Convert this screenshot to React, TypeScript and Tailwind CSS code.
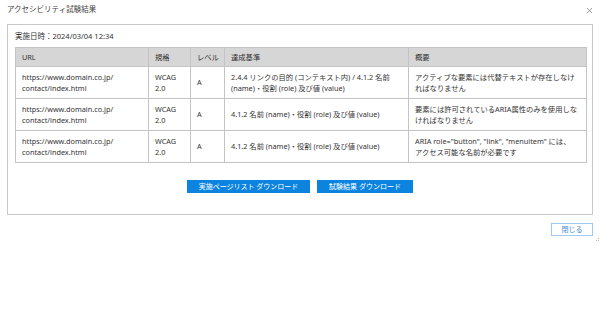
import { X } from 'lucide-react'

// ─── Data ─────────────────────────────────────────────────────────────────────

type Row = { url: string[]; std: string[]; level: string; criteria: string[]; summary: string[] }

const ROWS: Row[] = [
  {
    url: ['https://www.domain.co.jp/', 'contact/index.html'],
    std: ['WCAG', '2.0'],
    level: 'A',
    criteria: ['2.4.4 リンクの目的 (コンテキスト内) / 4.1.2 名前', '(name)・役割 (role) 及び値 (value)'],
    summary: ['アクティブな要素には代替テキストが存在しなけ', 'ればなりません'],
  },
  {
    url: ['https://www.domain.co.jp/', 'contact/index.html'],
    std: ['WCAG', '2.0'],
    level: 'A',
    criteria: ['4.1.2 名前 (name)・役割 (role) 及び値 (value)'],
    summary: ['要素には許可されているARIA属性のみを使用しな', 'ければなりません'],
  },
  {
    url: ['https://www.domain.co.jp/', 'contact/index.html'],
    std: ['WCAG', '2.0'],
    level: 'A',
    criteria: ['4.1.2 名前 (name)・役割 (role) 及び値 (value)'],
    summary: ['ARIA role="button", "link", "menuitem" には、', 'アクセス可能な名前が必要です'],
  },
]

const FONT = "font-['Noto_Sans','Noto_Sans_CJK_JP',sans-serif]"

function Lines({ lines }: { lines: string[] }) {
  return (
    <>
      {lines.map((l, i) => (
        <div key={i} className="whitespace-nowrap">{l}</div>
      ))}
    </>
  )
}

// ─── Component ────────────────────────────────────────────────────────────────

export default function App() {
  const cell = 'border border-[#c4c4c4] px-[6px] py-0 align-middle'
  return (
    <div className={`relative w-[600px] h-[325px] bg-white text-[#333] ${FONT}`}>
      {/* Title bar */}
      <div className="flex items-center justify-between pl-[7px] pr-[6px] h-[20px]">
        <span className="text-[7.5px] leading-none text-[#444]">アクセシビリティ試験結果</span>
        <X size={9} strokeWidth={1.5} className="text-[#555]" />
      </div>

      {/* Main panel */}
      <div className="mx-[7px] mt-[4px] h-[191px] border border-[#c9c9c9] px-[7px] pt-[6px]">
        <div className="text-[7.5px] leading-[10px] mb-[6px]">実施日時：2024/03/04 12:34</div>

        <table className="w-[571px] table-fixed border-collapse text-[7.3px] leading-[11px] text-[#333]">
          <colgroup>
            <col className="w-[133px]" />
            <col className="w-[42px]" />
            <col className="w-[34px]" />
            <col className="w-[184px]" />
            <col className="w-[178px]" />
          </colgroup>
          <thead>
            <tr className="h-[19px] bg-[#d6d6d6]">
              {['URL', '規格', 'レベル', '達成基準', '概要'].map(h => (
                <th
                  key={h}
                  className="border border-[#c4c4c4] px-[6px] py-0 text-left font-normal whitespace-nowrap overflow-visible"
                >
                  {h}
                </th>
              ))}
            </tr>
          </thead>
          <tbody>
            {ROWS.map((r, i) => (
              <tr key={i} className="h-[32px]">
                <td className={cell}><Lines lines={r.url} /></td>
                <td className={cell}><Lines lines={r.std} /></td>
                <td className={cell}>{r.level}</td>
                <td className={cell}><Lines lines={r.criteria} /></td>
                <td className={`${cell} pr-[2px]`}><Lines lines={r.summary} /></td>
              </tr>
            ))}
          </tbody>
        </table>

        {/* Downloads */}
        <div className="flex justify-center gap-[7px] mt-[17px]">
          <button className="h-[13px] w-[123px] bg-[#0c84df] text-white text-[7px] leading-none">
            実施ページリスト ダウンロード
          </button>
          <button className="h-[13px] w-[96px] bg-[#0c84df] text-white text-[7px] leading-none">
            試験結果 ダウンロード
          </button>
        </div>
      </div>

      {/* Footer */}
      <div className="flex justify-end pr-[7px] mt-[8px]">
        <button className="h-[13px] w-[42px] border border-[#9ccaf0] bg-white text-[#3d8fd6] text-[7px] leading-none">
          閉じる
        </button>
      </div>

      {/* Resize grip */}
      <div className="absolute right-[1px] top-[238px] grid grid-cols-2 gap-[1px]">
        <span className="w-[1px] h-[1px]" />
        <span className="w-[1px] h-[1px] bg-[#bbb]" />
        <span className="w-[1px] h-[1px] bg-[#bbb]" />
        <span className="w-[1px] h-[1px] bg-[#bbb]" />
      </div>
    </div>
  )
}
